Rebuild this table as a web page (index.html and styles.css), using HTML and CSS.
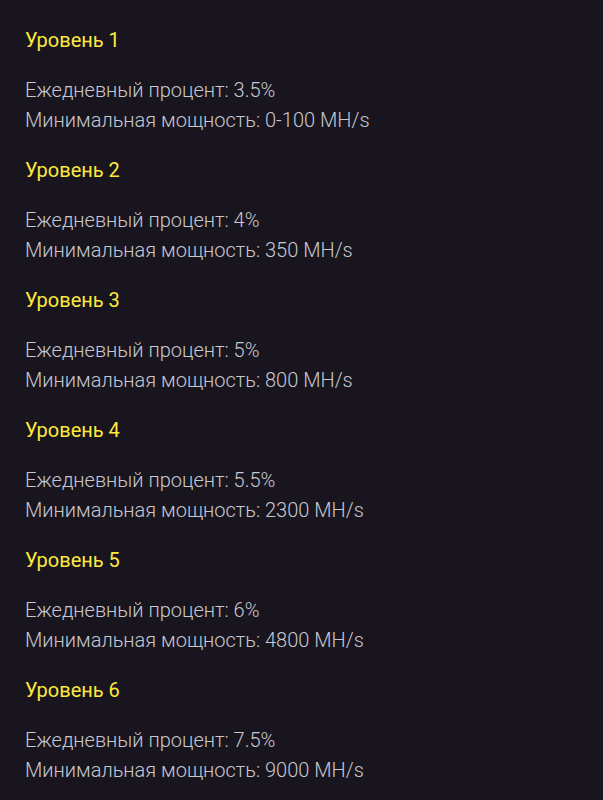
FILE: index.html
```html
<!DOCTYPE html>
<html lang="ru">

<head>
    <meta charset="UTF-8">
    <meta content="width=device-width, initial-scale=1.0" name="viewport">
    <title>Уровни</title>
    <link rel="stylesheet" href="styles.css">
</head>

<body>
<div class="levels">
    <div class="level">
        <h3>Уровень 1</h3>
        <p>Ежедневный процент: 3.5%<br>Минимальная мощность: 0-100 MH/s</p>
    </div>
    <div class="level">
        <h3>Уровень 2</h3>
        <p>Ежедневный процент: 4%<br>Минимальная мощность: 350 MH/s</p>
    </div>
    <div class="level">
        <h3>Уровень 3</h3>
        <p>Ежедневный процент: 5%<br>Минимальная мощность: 800 MH/s</p>
    </div>
    <div class="level">
        <h3>Уровень 4</h3>
        <p>Ежедневный процент: 5.5%<br>Минимальная мощность: 2300 MH/s</p>
    </div>
    <div class="level">
        <h3>Уровень 5</h3>
        <p>Ежедневный процент: 6%<br>Минимальная мощность: 4800 MH/s</p>
    </div>
    <div class="level">
        <h3>Уровень 6</h3>
        <p>Ежедневный процент: 7.5%<br>Минимальная мощность: 9000 MH/s</p>
    </div>
</div>
</body>

</html>
```

FILE: styles.css
```css
html, body {
    margin: 0;
    padding: 0;
    background-color: #18151f;
}

body {
    font-family: Roboto, "Noto Sans", sans-serif;
}

.levels {
    padding: 25px 25px 0;
}

.level h3 {
    margin: 0 0 20px;
    font-size: 20px;
    line-height: 30px;
    font-weight: 400;
    color: #ffe93b;
}

.level p {
    margin: 0 0 20px;
    font-size: 20px;
    line-height: 30px;
    font-weight: 300;
    color: #c8c8d0;
}
```
